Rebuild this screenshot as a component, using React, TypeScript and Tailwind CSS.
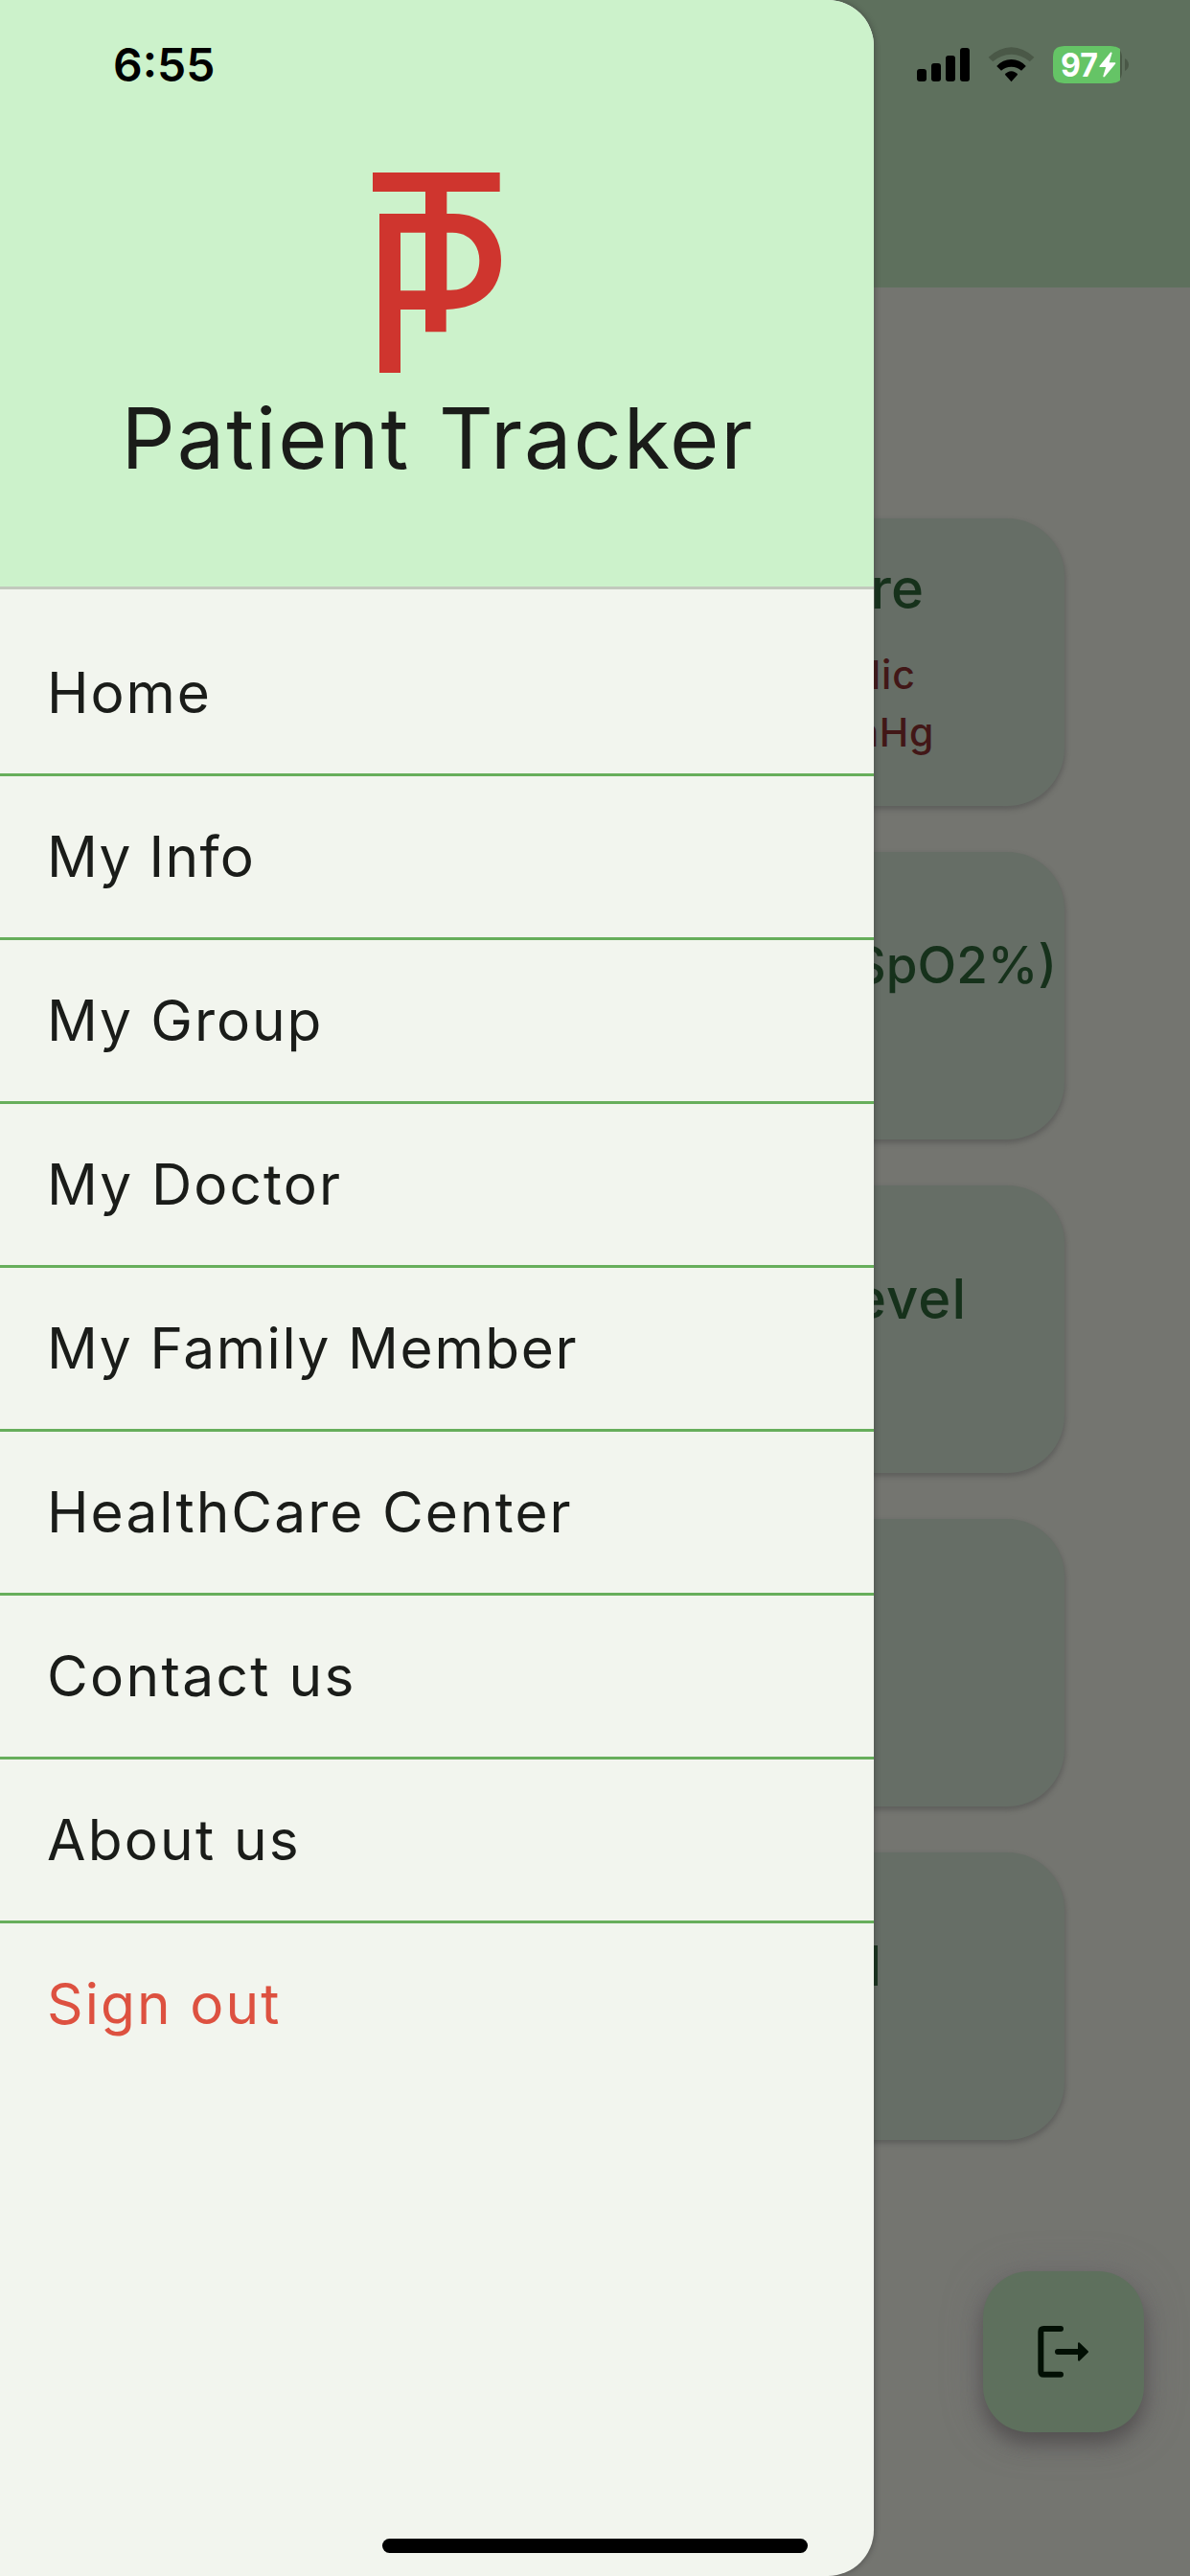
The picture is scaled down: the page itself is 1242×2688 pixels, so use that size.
import React from "react";

const menuItems = [
  { label: "Home", spacing: "tracking-[1.9px]" },
  { label: "My Info", spacing: "tracking-[1.3px]" },
  { label: "My Group", spacing: "tracking-[1.9px]" },
  { label: "My Doctor", spacing: "tracking-[2.1px]" },
  { label: "My Family Member", spacing: "tracking-[1.6px]" },
  { label: "HealthCare Center", spacing: "tracking-[2.05px]" },
  { label: "Contact us", spacing: "tracking-[2.3px]" },
  { label: "About us", spacing: "tracking-[2.2px]" },
];

function Logo() {
  return (
    <svg className="h-[209px] w-[134px]" viewBox="88 61 402 627" fill="#cf352e">
      <path d="M88 61H486V121H320V190H342C432 190 490 250 490 336C490 430 425 486 318 490V560H253V490H175V688H109V190H253V121H88Z M175 249V431H253V249Z M320 249V429H332C388 429 422 390 422 336C422 288 390 249 338 249Z" fillRule="evenodd" />
    </svg>
  );
}

function StatusIcons() {
  return (
    <svg className="h-[39px] w-[222px]" viewBox="957 48 222 39">
      <rect x="957" y="72" width="10" height="13" rx="3" />
      <rect x="972" y="66" width="10" height="19" rx="3" />
      <rect x="987" y="58" width="10" height="27" rx="3" />
      <rect x="1002" y="50" width="10" height="35" rx="3" />
      <path d="M1031.6 59.7Q1043 49.2 1055.5 49.2T1079.4 59.7L1074.8 64.3Q1066 56.7 1055.5 56.7T1036.2 64.3Z" fill="#4a5847" />
      <path d="M1040.2 69Q1046.5 62 1055.5 62T1070.8 69L1066 73.8Q1061.5 69.7 1055.5 69.7T1045 73.8Z" />
      <path d="M1048.8 77.8Q1051.5 74.2 1055.5 74.2T1062.2 77.8L1055.5 85.2Z" />
      <rect x="1099" y="48" width="72" height="39" rx="11.5" fill="#4a5847" />
      <path d="M1169 51V84Q1165 87 1159 87H1111Q1099 87 1099 76V59Q1099 48 1111 48H1159Q1165 48 1169 51Z" fill="#65c466" />
      <path d="M1174 61Q1178 63.5 1178 67.5T1174 74Z" fill="#4a5847" />
      <text x="1107" y="79.7" className="font-['Inter',sans-serif] text-[34.5px] font-bold" textLength="39" lengthAdjust="spacingAndGlyphs" fill="#fff">97</text>
      <path d="M1159.2 54.6L1147.4 69Q1147.3 70 1148.2 70H1154.2L1151.3 79.5Q1151.7 81 1153 80L1164.4 66.3Q1164.5 65.4 1163.5 65.3H1157.7L1160.6 55.6Q1160.4 54 1159.2 54.6Z" fill="#fff" />
    </svg>
  );
}

function Card({ children }: { children?: React.ReactNode }) {
  return (
    <section className="flex h-[300px] w-[980px] shrink-0 flex-col items-end rounded-[60px] bg-[#666e66] font-medium whitespace-nowrap text-[#16311b] shadow-[0_3px_5px_1px_rgba(70,70,70,0.45)]">
      {children}
    </section>
  );
}

function Home() {
  return (
    <main className="flex h-full w-full flex-col bg-[#747570]">
      <header className="h-[300px] shrink-0 bg-[#5e705d]" />
      <div className="mt-[241px] ml-[131px] flex flex-col gap-12">
        <Card>
          <h2 className="mt-[37px] mr-[147px] text-[58px] leading-[72px]">Pressure</h2>
          <p className="mt-[24px] mr-[155px] text-[41px] leading-[60px] tracking-[1px] text-[#421717]">Systolic</p>
          <p className="mr-[136px] text-[41px] leading-[60px] tracking-[0.6px] text-[#421717]">mmHg</p>
        </Card>
        <Card>
          <h2 className="mt-[82px] mr-[8px] text-[53px] leading-[72px]">(SpO2%)</h2>
        </Card>
        <Card>
          <h2 className="mt-[82px] mr-[102px] text-[58px] leading-[72px] tracking-[1px]">Level</h2>
        </Card>
        <Card />
        <Card>
          <h2 className="mt-[82px] mr-[190px] text-[58px] leading-[72px] tracking-[1px]">Cholesterol</h2>
        </Card>
      </div>
    </main>
  );
}

function Drawer() {
  return (
    <aside className="absolute inset-y-0 left-0 flex w-[912px] flex-col overflow-hidden rounded-r-[48px] bg-[#f2f5ee] text-[#1a1c19] shadow-[1px_0_5px_1px_rgba(50,50,50,0.35)]">
      <header className="flex h-[615px] shrink-0 flex-col items-center border-b-[3px] border-[#c2c9bd] bg-[#ccf2cb] pt-[180px]">
        <Logo />
        <h1 className="mt-[14px] pl-[2px] text-[88px] leading-[108px] tracking-[2px] [word-spacing:3px] whitespace-nowrap">Patient Tracker</h1>
      </header>
      <nav className="flex flex-col pt-6 text-[58.6px] leading-[168px] whitespace-nowrap">
        {menuItems.map((item) => (
          <a key={item.label} className={`h-[171px] border-b-[3px] border-[#67ae5b] pl-[49px] ${item.spacing}`}>
            {item.label}
          </a>
        ))}
        <a className="h-[168px] pl-[49px] tracking-[2.1px] text-[#dd5140]">Sign out</a>
      </nav>
    </aside>
  );
}

export default function App() {
  return (
    <div className="relative h-[2688px] w-[1242px] overflow-hidden font-['Inter',sans-serif]">
      <Home />
      <button className="absolute top-[2370px] left-[1026px] flex h-[168px] w-[168px] items-center justify-center rounded-[48px] bg-[#5e705d] shadow-[0_12px_20px_0_rgba(65,62,62,0.6),0_4px_36px_3px_rgba(110,105,112,0.6)]">
        <svg className="h-[54px] w-[54px]" viewBox="309 291 162 162" fill="none" stroke="#020f04" strokeWidth="18" strokeLinecap="round" strokeLinejoin="round">
          <path d="M381 300H328Q319 300 319 309V434Q319 443 328 443H381M372 372H440" />
          <path d="M438 346L465 372L438 398Z" fill="#020f04" strokeWidth="6" />
        </svg>
      </button>
      <Drawer />
      <div className="absolute inset-x-0 top-0 flex h-[135px] items-start justify-between pt-[48px] pr-[63px] pl-[118px]">
        <time className="text-[48px] leading-[40px] font-[560] text-black">6:55</time>
        <StatusIcons />
      </div>
      <div className="absolute bottom-[24px] left-[399px] h-[15px] w-[444px] rounded-full bg-black" />
    </div>
  );
}
